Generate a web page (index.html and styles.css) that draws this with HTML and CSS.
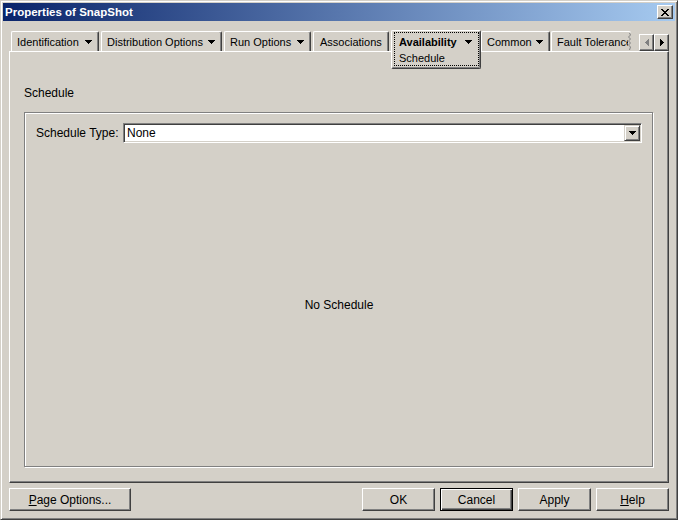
FILE: index.html
```html
<!DOCTYPE html>
<html>
<head>
<meta charset="utf-8">
<title>Properties of SnapShot</title>
<link rel="stylesheet" href="styles.css">
</head>
<body>
<div class="window">
  <div class="titlebar">
    <span class="title">Properties of SnapShot</span>
    <div class="close">
      <svg width="8" height="7" viewBox="0 0 8 7" shape-rendering="crispEdges"><path fill="#000" d="M0 0h2v1H0zM6 0h2v1H6zM1 1h2v1H1zM5 1h2v1H5zM2 2h4v1H2zM3 3h2v1H3zM2 4h4v1H2zM1 5h2v1H1zM5 5h2v1H5zM0 6h2v1H0zM6 6h2v1H6z"/></svg>
    </div>
  </div>

  <div class="tabstrip">
    <div class="tab w-ident"><span>Identification</span><svg class="arrow" width="7" height="4" viewBox="0 0 7 4" shape-rendering="crispEdges"><path d="M0 0h7v1H0zM1 1h5v1H1zM2 2h3v1H2zM3 3h1v1H3z"/></svg></div>
    <div class="tab w-dist"><span>Distribution Options</span><svg class="arrow" width="7" height="4" viewBox="0 0 7 4" shape-rendering="crispEdges"><path d="M0 0h7v1H0zM1 1h5v1H1zM2 2h3v1H2zM3 3h1v1H3z"/></svg></div>
    <div class="tab w-run"><span>Run Options</span><svg class="arrow" width="7" height="4" viewBox="0 0 7 4" shape-rendering="crispEdges"><path d="M0 0h7v1H0zM1 1h5v1H1zM2 2h3v1H2zM3 3h1v1H3z"/></svg></div>
    <div class="tab w-assoc"><span>Associations</span></div>
    <div class="tab selected">
      <div class="focus">
        <div class="sel-row"><span>Availability</span><svg class="arrow" width="7" height="4" viewBox="0 0 7 4" shape-rendering="crispEdges"><path d="M0 0h7v1H0zM1 1h5v1H1zM2 2h3v1H2zM3 3h1v1H3z"/></svg></div>
        <div class="sub">Schedule</div>
      </div>
    </div>
    <div class="tab w-common"><span>Common</span><svg class="arrow" width="7" height="4" viewBox="0 0 7 4" shape-rendering="crispEdges"><path d="M0 0h7v1H0zM1 1h5v1H1zM2 2h3v1H2zM3 3h1v1H3z"/></svg></div>
    <div class="tab w-fault"><span class="clip-text">Fault Tolerance</span><svg class="jag" width="3" height="17" viewBox="0 0 3 17"><polyline points="1.5,0 2.5,2 0.5,4 2.5,6 0.5,8 2.5,10 0.5,12 2.5,14 1.5,17" fill="none" stroke="#808080" stroke-width="1"/></svg></div>
    <div class="scroller">
      <div class="sbtn"><svg width="4" height="7" viewBox="0 0 4 7" shape-rendering="crispEdges"><path fill="#808080" d="M3 0h1v7H3zM2 1h1v5H2zM1 2h1v3H1zM0 3h1v1H0z"/></svg></div>
      <div class="sbtn"><svg width="4" height="7" viewBox="0 0 4 7" shape-rendering="crispEdges"><path fill="#000" d="M0 0h1v7H0zM1 1h1v5H1zM2 2h1v3H2zM3 3h1v1H3z"/></svg></div>
    </div>
  </div>

  <div class="panel">
    <div class="section-label">Schedule</div>
    <div class="group">
      <div class="field-row">
        <span class="field-label">Schedule Type:</span>
        <div class="combo">
          <span class="combo-text">None</span>
          <div class="combo-btn"><svg width="7" height="4" viewBox="0 0 7 4" shape-rendering="crispEdges"><path d="M0 0h7v1H0zM1 1h5v1H1zM2 2h3v1H2zM3 3h1v1H3z"/></svg></div>
        </div>
      </div>
      <div class="empty">No Schedule</div>
    </div>
  </div>

  <div class="buttons">
    <div class="btn page"><span><u>P</u>age Options...</span></div>
    <div class="btn-group">
      <div class="btn">OK</div>
      <div class="btn default">Cancel</div>
      <div class="btn">Apply</div>
      <div class="btn"><span><u>H</u>elp</span></div>
    </div>
  </div>
</div>
</body>
</html>
```

FILE: styles.css
```css
html, body {
  margin: 0;
  padding: 0;
}

body {
  font-family: "Liberation Sans", Arial, sans-serif;
  font-size: 12px;
  color: #000;
  background: #d4d0c8;
}

.window {
  box-sizing: border-box;
  width: 678px;
  height: 520px;
  background: #d4d0c8;
  border: 1px solid;
  border-color: #d4d0c8 #404040 #404040 #d4d0c8;
  box-shadow: inset 1px 1px 0 #fff, inset -1px -1px 0 #808080;
  padding: 2px;
  display: flex;
  flex-direction: column;
}

/* Title bar */
.titlebar {
  flex: none;
  height: 18px;
  display: flex;
  align-items: center;
  padding-left: 2px;
  background: linear-gradient(to right, #0a246a, #a6caf0);
}

.title {
  flex: 1;
  color: #fff;
  font-weight: bold;
  font-size: 11.5px;
  white-space: nowrap;
}

.close {
  box-sizing: border-box;
  width: 16px;
  height: 14px;
  margin-right: 2px;
  background: #d4d0c8;
  border: 1px solid;
  border-color: #fff #404040 #404040 #fff;
  box-shadow: inset -1px -1px 0 #808080;
  display: flex;
  align-items: center;
  justify-content: center;
}

/* Tabs */
.tabstrip {
  flex: none;
  height: 21px;
  margin: 9px 6px 0;
  padding-left: 2px;
  display: flex;
  align-items: flex-end;
  font-size: 11px;
}

.tab {
  box-sizing: border-box;
  flex: none;
  height: 20px;
  padding: 1px 6px 0 5px;
  margin-right: 2px;
  display: flex;
  align-items: center;
  justify-content: space-between;
  white-space: nowrap;
  background: #d4d0c8;
  border-top: 1px solid #fff;
  border-left: 1px solid #fff;
  border-right: 1px solid #404040;
  box-shadow: inset -1px 0 0 #808080;
  border-radius: 2px 2px 0 0;
}

.arrow {
  flex: none;
  fill: #000;
}

.w-ident { width: 88px; }
.w-dist { width: 121px; }
.w-run { width: 87px; }
.w-assoc { width: 76px; padding-left: 6px; }
.w-common { width: 69px; margin-right: 1px; }

.w-fault {
  width: 80px;
  padding-right: 0;
  padding-left: 5px;
  border-right: none;
  box-shadow: none;
  justify-content: flex-start;
  overflow: hidden;
}

.clip-text {
  flex: 1;
  overflow: hidden;
  white-space: nowrap;
}

.jag {
  flex: none;
  margin-top: -1px;
}

.tab.selected {
  display: block;
  width: 90px;
  height: 39px;
  margin-right: 0;
  margin-bottom: -18px;
  padding: 1px 1px 2px 2px;
  position: relative;
  z-index: 1;
  border: 1px solid;
  border-color: #fff #404040 #404040 #fff;
  box-shadow: inset -1px -1px 0 #808080;
  border-radius: 2px;
}

.focus {
  box-sizing: border-box;
  height: 34px;
  border: 1px dotted #000;
  padding: 0 6px 0 4px;
}

.sel-row {
  height: 18px;
  display: flex;
  align-items: center;
  justify-content: space-between;
  font-weight: bold;
}

.sub {
  height: 14px;
  padding-top: 1px;
  box-sizing: border-box;
  line-height: 13px;
}

.scroller {
  margin-left: auto;
  display: flex;
}

.sbtn {
  box-sizing: border-box;
  width: 15px;
  height: 17px;
  background: #d4d0c8;
  border: 1px solid;
  border-color: #fff #404040 #404040 #fff;
  box-shadow: inset -1px -1px 0 #808080;
  display: flex;
  align-items: center;
  justify-content: center;
}

/* Panel */
.panel {
  flex: none;
  box-sizing: border-box;
  height: 432px;
  margin: 0 6px;
  border: 1px solid;
  border-color: #fff #404040 #404040 #fff;
  box-shadow: inset -1px -1px 0 #808080;
  padding: 34px 15px 15px 14px;
  display: flex;
  flex-direction: column;
}

.section-label {
  line-height: 14px;
  margin-bottom: 12px;
}

.group {
  flex: 1;
  border: 1px solid #808080;
  box-shadow: 1px 1px 0 #fff, inset 1px 1px 0 #fff;
  padding: 10px 10px 0 11px;
  display: flex;
  flex-direction: column;
}

.field-row {
  display: flex;
  align-items: center;
  height: 20px;
}

.field-label {
  flex: none;
  width: 87px;
  white-space: nowrap;
}

.combo {
  flex: 1;
  box-sizing: border-box;
  height: 20px;
  background: #fff;
  border: 1px solid;
  border-color: #808080 #fff #fff #808080;
  box-shadow: inset 1px 1px 0 #404040, inset -1px -1px 0 #d4d0c8;
  padding: 1px;
  display: flex;
  align-items: center;
}

.combo-text {
  flex: 1;
  padding-left: 2px;
}

.combo-btn {
  box-sizing: border-box;
  width: 16px;
  height: 16px;
  background: #d4d0c8;
  border: 1px solid;
  border-color: #d4d0c8 #404040 #404040 #d4d0c8;
  box-shadow: inset 1px 1px 0 #fff, inset -1px -1px 0 #808080;
  display: flex;
  align-items: center;
  justify-content: center;
}

.empty {
  flex: 1;
  display: flex;
  align-items: center;
  justify-content: center;
}

/* Buttons */
.buttons {
  flex: none;
  height: 23px;
  margin: 5px 6px 0;
  display: flex;
  justify-content: space-between;
}

.btn-group {
  display: flex;
  gap: 5px;
}

.btn {
  box-sizing: border-box;
  width: 73px;
  height: 23px;
  background: #d4d0c8;
  border: 1px solid;
  border-color: #fff #404040 #404040 #fff;
  box-shadow: inset -1px -1px 0 #808080;
  display: flex;
  align-items: center;
  justify-content: center;
  white-space: nowrap;
}

.btn.page {
  width: 122px;
}

.btn.default {
  border-color: #000;
  box-shadow: inset 1px 1px 0 #fff, inset -1px -1px 0 #404040, inset -2px -2px 0 #808080;
}
```
